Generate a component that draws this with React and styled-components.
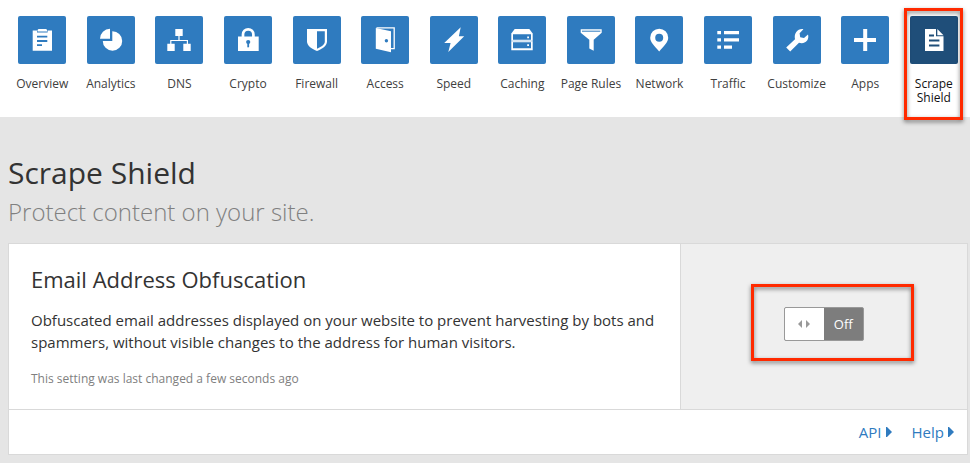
import React, { useState } from "react";
import styled, { createGlobalStyle, css } from "styled-components";

const GlobalStyle = createGlobalStyle`
  * {
    box-sizing: border-box;
  }

  body {
    margin: 0;
    background: #e5e5e5;
    color: #333;
    font-family: "Open Sans", "Noto Sans", sans-serif;
    font-size: 15px;
    line-height: 22px;
  }
`;

const BLUE = "#2f7bbf";
const NAVY = "#1f4e79";

const highlight = css`
  &::after {
    content: "";
    position: absolute;
    border: 3px solid #ff2a00;
    filter: drop-shadow(0 2px 2px rgba(0, 0, 0, 0.5));
    pointer-events: none;
  }
`;

const Nav = styled.nav`
  background: #fff;
  padding: 16px 2px 12px 8px;
`;

const NavList = styled.ul`
  display: flex;
  list-style: none;
  margin: 0;
  padding: 0;
`;

const NavItem = styled.li`
  flex: 1;
  min-width: 0;
`;

const NavLink = styled.a`
  position: relative;
  display: flex;
  flex-direction: column;
  align-items: center;
  gap: 13px;
  color: ${(props) => (props.$active ? "#111" : "#404040")};
  font-size: 12px;
  line-height: 14px;
  text-align: center;
  text-decoration: none;

  ${(props) => props.$active && highlight}

  &::after {
    top: -8px;
    right: 5px;
    bottom: -15px;
    left: 4px;
  }
`;

const Tile = styled.span`
  display: block;
  width: 48px;
  height: 48px;
  border-radius: 2px;
  background: ${(props) => (props.$active ? NAVY : BLUE)};
  color: ${(props) => (props.$active ? NAVY : BLUE)};

  svg {
    display: block;
    width: 100%;
    height: 100%;
  }
`;

const Main = styled.main`
  padding: 36px 2px 8px 8px;
`;

const Title = styled.h1`
  margin: 0;
  font-size: 30px;
  font-weight: 400;
  line-height: 40px;
`;

const Subtitle = styled.p`
  margin: 0 0 13px;
  color: #808080;
  font-size: 24px;
  font-weight: 300;
  line-height: 37px;
`;

const Card = styled.section`
  background: #fff;
  border: 1px solid #d9d9d9;
`;

const CardBody = styled.div`
  display: grid;
  grid-template-columns: 7fr 3fr;
  border-bottom: 1px solid #d9d9d9;
`;

const CardText = styled.div`
  padding: 19px 22px 20px;
`;

const CardTitle = styled.h2`
  margin: 0 0 14px;
  font-size: 22px;
  font-weight: 400;
  line-height: 32px;
`;

const Description = styled.p`
  margin: 0 0 16px;
`;

const Changed = styled.p`
  margin: 0;
  color: #808080;
  font-size: 12px;
  line-height: 20px;
`;

const CardControl = styled.div`
  display: flex;
  align-items: center;
  justify-content: center;
  padding-bottom: 5px;
  border-left: 1px solid #d9d9d9;
  background: #efefef;
`;

const ToggleWrap = styled.div`
  position: relative;
  ${highlight}

  &::after {
    top: -23px;
    right: -50px;
    bottom: -20px;
    left: -33px;
  }
`;

const Toggle = styled.button`
  display: flex;
  flex-direction: ${(props) => (props.$on ? "row-reverse" : "row")};
  width: 80px;
  height: 34px;
  padding: 0;
  overflow: hidden;
  border: 1px solid #999;
  border-radius: 2px;
  background: ${(props) => (props.$on ? "#9bca3e" : "#7d7d7d")};
  color: #fff;
  font-family: inherit;
  font-size: 13px;
  cursor: pointer;
`;

const ToggleHandle = styled.span`
  display: flex;
  align-items: center;
  justify-content: center;
  flex: 1;
  align-self: stretch;
  background: #fff;
`;

const ToggleLabel = styled.span`
  flex: 1;
  align-self: center;
`;

const CardFooter = styled.footer`
  display: flex;
  justify-content: flex-end;
  gap: 20px;
  padding: 11px 13px 11px;
`;

const FooterLink = styled.a`
  display: flex;
  align-items: center;
  gap: 4px;
  color: ${BLUE};
  text-decoration: none;
`;

// Icons are drawn on the 48px tile, cut-outs use currentColor (the tile colour)
const icons = {
  overview: (
    <>
      <path d="M14.7 14.5h4.3v2h10.6v-2h4.4v20.3H14.7z" />
      <path d="M19.5 15.5V14l1-1h7.6l1 1v1.5z" />
      <path
        d="M19 20.7h10.3M19 25h10.3M19 29.2h5"
        stroke="currentColor"
        strokeWidth="1.8"
      />
    </>
  ),
  analytics: (
    <>
      <path d="M25.3 15.3a9.7 9.7 0 1 1-9.5 9.6h9.5z" />
      <path d="M23 12.7v10H13a10 10 0 0 1 10-10z" />
    </>
  ),
  dns: (
    <>
      <path d="M20.3 13h7.4v7h-7.4zM12.3 27.7h7.4V35h-7.4zM28.3 27.7h7.4V35h-7.4z" />
      <path d="M24 20v4.5M15.8 28v-3.5h16.6V28" fill="none" stroke="#fff" strokeWidth="1.2" />
    </>
  ),
  crypto: (
    <>
      <path d="M14 20.5h20.7V35H14z" />
      <path d="M19 21v-2.5a5.2 5.2 0 0 1 10.4 0V21" fill="none" stroke="#fff" strokeWidth="2.7" />
      <circle cx="24.2" cy="26" r="2.1" fill="currentColor" />
      <path d="M23.3 27h1.8v4.3h-1.8z" fill="currentColor" />
    </>
  ),
  firewall: (
    <>
      <path d="M14 13h20v12.5c0 4.5-5 7.5-10 9.5-5-2-10-5-10-9.5z" />
      <path d="M24 15.3h7.8v10.4c0 3-3.8 5.2-7.8 7z" fill="currentColor" />
    </>
  ),
  access: (
    <>
      <path d="M15.5 11.9h17.7v20.8H30" fill="none" stroke="#fff" strokeWidth="1.3" />
      <path d="M14.8 12L30 15.3v21l-15.2-3.5z" />
      <circle cx="25.4" cy="24.8" r="1.7" fill="currentColor" />
    </>
  ),
  speed: <path d="M30.7 11.3l-1.8 9h5.3L18.3 36l2.3-9h-6.4z" />,
  caching: (
    <>
      <path d="M16.7 13h14.6l3.4 4.5v16.7H13.3V17.5z" />
      <path d="M15 18.3h18v5.5H15zM15 26.3h18v6H15z" fill="currentColor" />
      <path d="M13.3 25h21.4" stroke="currentColor" strokeWidth=".4" />
      <path d="M29.2 20.4h1.8v1.8h-1.8zM29.2 28.2h1.8V30h-1.8z" />
    </>
  ),
  rules: (
    <>
      <path d="M13.7 13.2h21v3.6l-8 7v11l-4.4-2.3v-8.7l-8.6-7z" />
      <path d="M15 15.2h18.4" stroke="currentColor" strokeWidth="1" />
    </>
  ),
  network: (
    <>
      <path d="M24.2 12.7a9 9 0 0 1 9 9c0 4.5-4.5 8.5-9 13.7-4.5-5.2-9-9.2-9-13.7a9 9 0 0 1 9-9z" />
      <circle cx="24.2" cy="21.7" r="4" fill="currentColor" />
    </>
  ),
  traffic: (
    <path d="M13.3 15H17v3.2h-3.7zM20 15h15v3.2H20zM13.3 22.2H17v3.2h-3.7zM20 22.2h15v3.2H20zM13.3 29.6H17v3.2h-3.7zM20 29.6h8v3.2h-8z" />
  ),
  customize: (
    <path d="M30.4 13.2l-3.8 4 .6 4 3.8.8 4-3.6c1 3.4-.4 6.5-3 7.9-2 1.1-4.2 1-6 .4L17.2 35.4l-4-3.9 8.8-8.3c-1.3-6.3 3-10.9 8.4-10z" />
  ),
  apps: <path d="M22.2 13h4v9H35v4h-8.8v9h-4v-9H13v-4h9.2z" />,
  scrape: (
    <>
      <path d="M15 13h11v7.3h7.5V35H15z" />
      <path d="M27.3 13l6.2 6.2h-6.2z" />
      <path
        d="M19 19.5h5M19 24.5h10.4M19 29.5h10.4"
        stroke="currentColor"
        strokeWidth="1.9"
      />
    </>
  ),
};

const navItems = [
  { label: "Overview", icon: "overview" },
  { label: "Analytics", icon: "analytics" },
  { label: "DNS", icon: "dns" },
  { label: "Crypto", icon: "crypto" },
  { label: "Firewall", icon: "firewall" },
  { label: "Access", icon: "access" },
  { label: "Speed", icon: "speed" },
  { label: "Caching", icon: "caching" },
  { label: "Page Rules", icon: "rules" },
  { label: "Network", icon: "network" },
  { label: "Traffic", icon: "traffic" },
  { label: "Customize", icon: "customize" },
  { label: "Apps", icon: "apps" },
  { label: "Scrape Shield", icon: "scrape", active: true },
];

const Arrow = () => (
  <svg width="6" height="12" viewBox="0 0 6 12" fill="currentColor" aria-hidden="true">
    <path d="M0 1h1l5 5-5 5H0z" />
  </svg>
);

const TopNav = () => (
  <Nav>
    <NavList>
      {navItems.map((el) => (
        <NavItem key={el.icon}>
          <NavLink
            href={`#${el.icon}`}
            $active={el.active}
            aria-current={el.active ? "page" : undefined}
          >
            <Tile $active={el.active}>
              <svg viewBox="0 0 48 48" fill="#fff" aria-hidden="true">
                {icons[el.icon]}
              </svg>
            </Tile>
            <span>{el.label}</span>
          </NavLink>
        </NavItem>
      ))}
    </NavList>
  </Nav>
);

const ObfuscationCard = () => {
  const [on, setOn] = useState(false);

  return (
    <Card>
      <CardBody>
        <CardText>
          <CardTitle id="obfuscation">Email Address Obfuscation</CardTitle>
          <Description>
            Obfuscated email addresses displayed on your website to prevent
            harvesting by bots and spammers, without visible changes to the
            address for human visitors.
          </Description>
          <Changed>This setting was last changed a few seconds ago</Changed>
        </CardText>
        <CardControl>
          <ToggleWrap>
            <Toggle
              type="button"
              role="switch"
              aria-checked={on}
              aria-labelledby="obfuscation"
              $on={on}
              onClick={() => setOn(!on)}
            >
              <ToggleHandle>
                <svg width="12" height="8" viewBox="0 0 12 8" fill="#999" aria-hidden="true">
                  <path d="M4 0v8L0 4zM8 0v8l4-4z" />
                </svg>
              </ToggleHandle>
              <ToggleLabel>{on ? "On" : "Off"}</ToggleLabel>
            </Toggle>
          </ToggleWrap>
        </CardControl>
      </CardBody>
      <CardFooter>
        <FooterLink href="#api">
          API <Arrow />
        </FooterLink>
        <FooterLink href="#help">
          Help <Arrow />
        </FooterLink>
      </CardFooter>
    </Card>
  );
};

export default function App() {
  return (
    <>
      <GlobalStyle />
      <TopNav />
      <Main>
        <Title>Scrape Shield</Title>
        <Subtitle>Protect content on your site.</Subtitle>
        <ObfuscationCard />
      </Main>
    </>
  );
}
